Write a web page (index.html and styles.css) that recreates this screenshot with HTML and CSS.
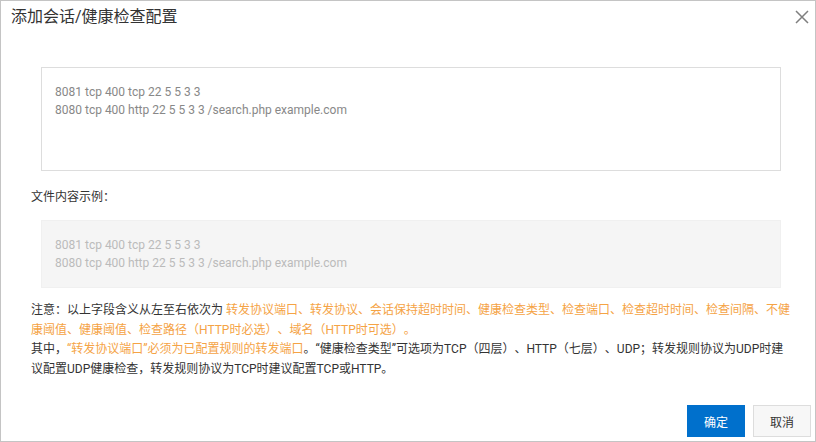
FILE: index.html
```html
<!DOCTYPE html>
<html lang="zh-CN">

<head>
  <meta charset="UTF-8" />
  <meta name="viewport" content="width=device-width, initial-scale=1.0" />
  <title>添加会话/健康检查配置</title>
  <link rel="stylesheet" href="styles.css">
</head>

<body>
  <div class="dialog">
    <div class="dialog-header">
      <h2 class="dialog-title">添加会话/健康检查配置</h2>
      <a href="#" class="dialog-close" title="关闭">
        <svg width="14" height="14" viewBox="0 0 14 14">
          <path d="M1 1L13 13M13 1L1 13" stroke="#7f7f7f" stroke-width="1.5" fill="none" />
        </svg>
      </a>
    </div>

    <div class="dialog-body">
      <textarea class="config-input" placeholder="8081 tcp 400 tcp 22 5 5 3 3&#10;8080 tcp 400 http 22 5 5 3 3 /search.php example.com"></textarea>

      <p class="label">文件内容示例：</p>
      <div class="sample">8081 tcp 400 tcp 22 5 5 3 3<br>8080 tcp 400 http 22 5 5 3 3 /search.php example.com</div>

      <p class="note">
        注意：以上字段含义从左至右依次为 <span class="hl">转发协议端口、转发协议、会话保持超时时间、健康检查类型、检查端口、检查超时时间、检查间隔、不健康阈值、健康阈值、检查路径（HTTP时必选）、域名（HTTP时可选）。</span><br>
        其中，<span class="hl">“转发协议端口”必须为已配置规则的转发端口</span>。“健康检查类型”可选项为TCP（四层）、HTTP（七层）、UDP；转发规则协议为UDP时建议配置UDP健康检查，转发规则协议为TCP时建议配置TCP或HTTP。
      </p>
    </div>

    <div class="dialog-footer">
      <button class="btn btn-primary">确定</button>
      <button class="btn">取消</button>
    </div>
  </div>
</body>

</html>
```

FILE: styles.css
```css
* {
  margin: 0;
  padding: 0;
  box-sizing: border-box;
  font-family: 'Roboto', 'Noto Sans CJK SC', sans-serif;
  text-spacing-trim: space-all;
}

body {
  background-color: #fff;
  color: #333;
  font-size: 12px;
}

.dialog {
  width: 816px;
  height: 442px;
  border: 1px solid #c4c4c4;
  display: flex;
  flex-direction: column;
  background-color: #fff;
}

.dialog-header {
  position: relative;
  height: 46px;
  padding: 6px 10px 0;
}

.dialog-title {
  font-size: 16px;
  font-weight: normal;
  line-height: 20px;
  color: #333;
}

.dialog-close {
  position: absolute;
  top: 9px;
  right: 6px;
  width: 14px;
  height: 14px;
  display: block;
}

.dialog-close svg {
  display: block;
}

.dialog-body {
  flex: 1;
  padding: 20px 23px 0 30px;
}

.config-input {
  display: block;
  width: 740px;
  height: 104px;
  margin: 0 0 17px 10px;
  padding: 15px 13px;
  border: 1px solid #ddd;
  resize: none;
  font-size: 12px;
  line-height: 18px;
  color: #666;
  outline: none;
}

.config-input::placeholder {
  color: #888;
}

.label {
  line-height: 18px;
  margin-bottom: 14px;
}

.sample {
  width: 740px;
  height: 68px;
  margin: 0 0 13px 10px;
  padding: 15px 13px;
  border: 1px solid #f0f0f0;
  background-color: #f5f5f5;
  color: #bbb;
  line-height: 18px;
}

.note {
  line-height: 19.5px;
  color: #333;
}

.hl {
  color: #f5a345;
}

.dialog-footer {
  display: flex;
  justify-content: flex-end;
  gap: 8px;
  padding: 0 4px 4px 0;
}

.btn {
  width: 58px;
  height: 32px;
  border: 1px solid #ddd;
  background-color: #f7f7f7;
  color: #333;
  font-size: 12px;
  cursor: pointer;
}

.btn-primary {
  border-color: #0070cc;
  background-color: #0070cc;
  color: #fff;
}
```
